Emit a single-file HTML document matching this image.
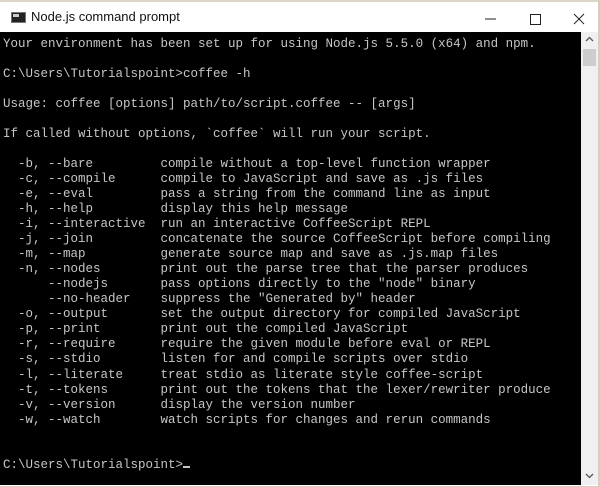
<!DOCTYPE html>
<html><head><style>
html,body{margin:0;padding:0;width:600px;height:487px;overflow:hidden;background:#e9e4da;}
#win{position:absolute;left:0;top:0;width:598px;height:486px;background:#fff;border-right:2px solid #d6cebf;border-bottom:1px solid #d6cebf;}
#title{position:absolute;left:0;top:0;width:598px;height:32px;background:#fff;border-top:2px solid #ddd6c8;box-sizing:border-box;}
#title .t{position:absolute;left:31px;top:7px;font:13px "Liberation Sans",sans-serif;color:#111;}
#ico{position:absolute;left:11px;top:10px;width:15px;height:11px;background:#222;border:1px solid #777;box-sizing:border-box;}
#ico:after{content:"";position:absolute;left:1px;top:1px;width:6px;height:3px;background:#ccc;}
#term{position:absolute;left:0;top:32px;width:581px;height:453px;background:#000;}
pre{margin:0;position:absolute;left:3px;top:4.5px;font:12.5px/15.05px "Liberation Mono",monospace;color:#c6c6c6;}
#sb{position:absolute;left:581px;top:32px;width:17px;height:453px;background:#f0f0f0;}
#thumb{position:absolute;left:2px;top:17px;width:13px;height:17px;background:#cdcdcd;}
.cur{display:inline-block;width:7px;height:2px;background:#c6c6c6;vertical-align:baseline;}
</style></head><body>
<div id="win">
<div id="title"><div id="ico"></div><div class="t">Node.js command prompt</div>
<svg style="position:absolute;left:480px;top:8px" width="110" height="18">
<line x1="5" y1="9" x2="16" y2="9" stroke="#222" stroke-width="1"/>
<rect x="50.5" y="4.5" width="10" height="10" fill="none" stroke="#222"/>
<line x1="94" y1="4" x2="104" y2="14" stroke="#222"/><line x1="104" y1="4" x2="94" y2="14" stroke="#222"/>
</svg></div>
<div id="term"><pre>Your environment has been set up for using Node.js 5.5.0 (x64) and npm.

C:\Users\Tutorialspoint&gt;coffee -h

Usage: coffee [options] path/to/script.coffee -- [args]

If called without options, `coffee` will run your script.

  -b, --bare         compile without a top-level function wrapper
  -c, --compile      compile to JavaScript and save as .js files
  -e, --eval         pass a string from the command line as input
  -h, --help         display this help message
  -i, --interactive  run an interactive CoffeeScript REPL
  -j, --join         concatenate the source CoffeeScript before compiling
  -m, --map          generate source map and save as .js.map files
  -n, --nodes        print out the parse tree that the parser produces
      --nodejs       pass options directly to the "node" binary
      --no-header    suppress the "Generated by" header
  -o, --output       set the output directory for compiled JavaScript
  -p, --print        print out the compiled JavaScript
  -r, --require      require the given module before eval or REPL
  -s, --stdio        listen for and compile scripts over stdio
  -l, --literate     treat stdio as literate style coffee-script
  -t, --tokens       print out the tokens that the lexer/rewriter produce
  -v, --version      display the version number
  -w, --watch        watch scripts for changes and rerun commands


C:\Users\Tutorialspoint&gt;<span class="cur"></span></pre></div>
<div id="sb"><div id="thumb"></div>
<svg style="position:absolute;left:4px;top:4px" width="9" height="6"><polyline points="1,5 4.5,1.5 8,5" fill="none" stroke="#555" stroke-width="1.3"/></svg>
<svg style="position:absolute;left:4px;top:441px" width="9" height="6"><polyline points="1,1 4.5,4.5 8,1" fill="none" stroke="#555" stroke-width="1.3"/></svg>
</div>
</div>
</body></html>
